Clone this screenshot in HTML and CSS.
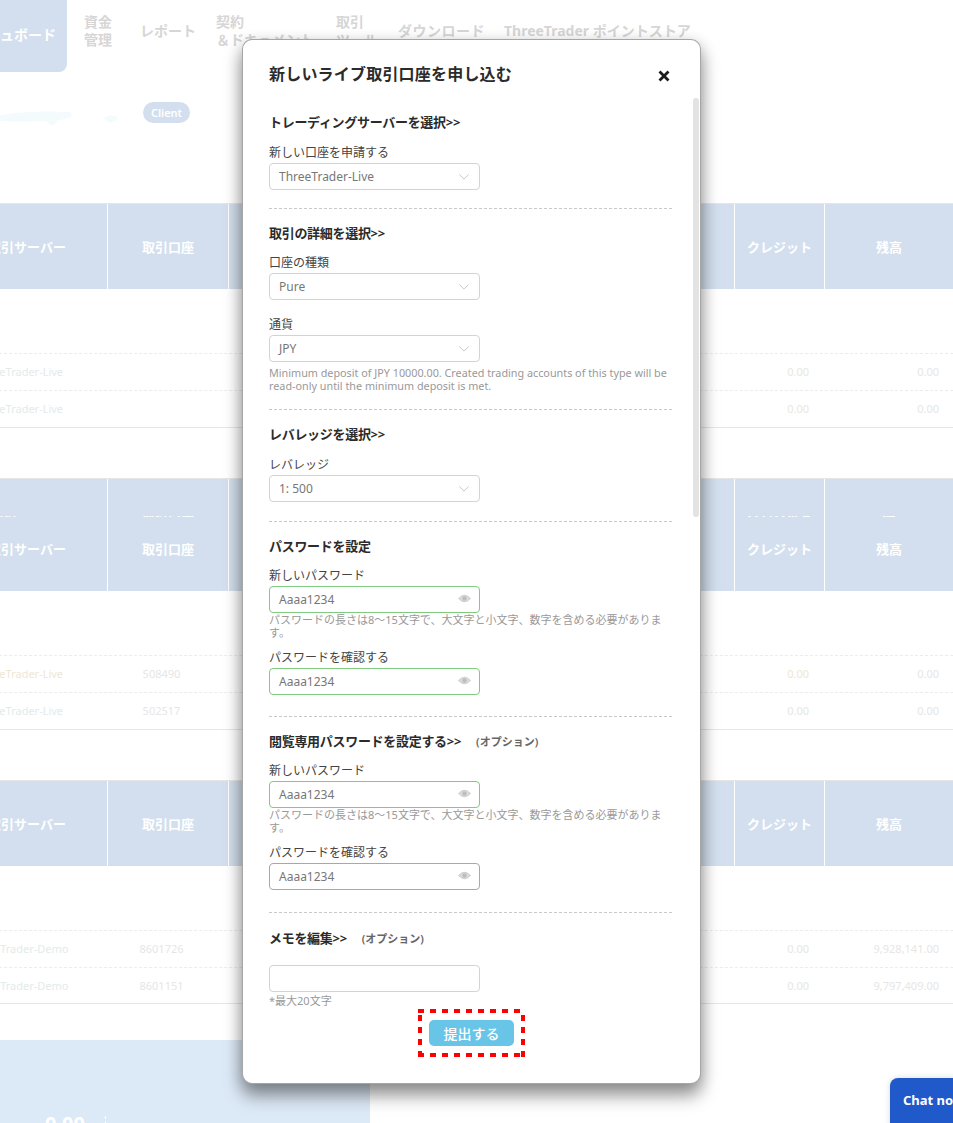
FILE: index.html
```html
<!DOCTYPE html>
<html lang="ja">
<head>
<meta charset="utf-8">
<title>新しいライブ取引口座を申し込む</title>
<link rel="stylesheet" href="styles.css">
</head>
<body>
<div class="page">
  <nav class="nav">
    <a class="tab">ダッシュボード</a>
    <a class="nav-item funds">資金<br>管理</a>
    <a class="nav-item">レポート</a>
    <a class="nav-item docs">契約<br>＆ドキュメント</a>
    <a class="nav-item tools">取引<br>ツール</a>
    <a class="nav-item dl">ダウンロード</a>
    <a class="nav-item">ThreeTrader ポイントストア</a>
  </nav>
  <div class="welcome">
    <svg class="smudge" width="125" height="20" viewBox="0 0 125 20"><path d="M0 6 Q30 1 70 3 L72 6 Q72 10 58 11 L52 17 L46 12 Q20 13 0 12Z" fill="#f3fbfd"/><path d="M103 9 L110 6 L117 8 L117 11 L110 14Z" fill="#f3fbfd"/></svg>
    <span class="badge">Client</span>
  </div>

  <section class="table t1">
    <div class="row head">
      <div class="cell">取引サーバー</div><div class="cell">取引口座</div><div class="cell"></div><div class="cell">クレジット</div><div class="cell">残高</div>
    </div>
    <div class="spacer"></div>
    <div class="row data"><div class="cell srv">ThreeTrader-Live</div><div class="cell"></div><div class="cell"></div><div class="cell num tint">0.00</div><div class="cell num">0.00</div></div>
    <div class="row data last"><div class="cell srv">ThreeTrader-Live</div><div class="cell"></div><div class="cell"></div><div class="cell num tint">0.00</div><div class="cell num">0.00</div></div>
  </section>

  <section class="table t2">
    <div class="row head tall">
      <div class="cell"><span class="ghost">取引</span>取引サーバー</div><div class="cell"><span class="ghost">取引口座</span>取引口座</div><div class="cell"></div><div class="cell"><span class="ghost">クレジット</span>クレジット</div><div class="cell"><span class="ghost">残</span>残高</div>
    </div>
    <div class="spacer"></div>
    <div class="row data"><div class="cell srv warm">ThreeTrader-Live</div><div class="cell acct">508490</div><div class="cell"></div><div class="cell num warm">0.00</div><div class="cell num">0.00</div></div>
    <div class="row data last"><div class="cell srv">ThreeTrader-Live</div><div class="cell acct">502517</div><div class="cell"></div><div class="cell num">0.00</div><div class="cell num">0.00</div></div>
  </section>

  <section class="table t3">
    <div class="row head">
      <div class="cell">取引サーバー</div><div class="cell">取引口座</div><div class="cell"></div><div class="cell">クレジット</div><div class="cell">残高</div>
    </div>
    <div class="spacer"></div>
    <div class="row data"><div class="cell srv">ThreeTrader-Demo</div><div class="cell acct">8601726</div><div class="cell"></div><div class="cell num">0.00</div><div class="cell num">9,928,141.00</div></div>
    <div class="row data last"><div class="cell srv">ThreeTrader-Demo</div><div class="cell acct">8601151</div><div class="cell"></div><div class="cell num">0.00</div><div class="cell num">9,797,409.00</div></div>
  </section>

  <div class="panel"><span class="panel-num">0.00</span><span class="panel-rule"></span></div>
</div>

<div class="modal">
  <header class="modal-head">
    <h1 class="modal-title">新しいライブ取引口座を申し込む</h1>
    <svg class="close" width="12" height="12" viewBox="0 0 12 12"><path d="M1.5 1.5 L10.5 10.5 M10.5 1.5 L1.5 10.5" stroke="#1b1b1b" stroke-width="2.8"/></svg>
  </header>
  <div class="modal-body">
    <span class="thumb"></span>

    <div class="sec s1">
      <h2 class="sec-title">トレーディングサーバーを選択&gt;&gt;</h2>
      <div class="label">新しい口座を申請する</div>
      <div class="control"><span>ThreeTrader-Live</span><svg class="chev" width="10" height="6" viewBox="0 0 12 7"><path d="M.5.5 L6 6 L11.500.5" fill="none" stroke="#bdbdbd"/></svg></div>
    </div>

    <div class="sec s2">
      <h2 class="sec-title">取引の詳細を選択&gt;&gt;</h2>
      <div class="label">口座の種類</div>
      <div class="control"><span>Pure</span><svg class="chev" width="10" height="6" viewBox="0 0 12 7"><path d="M.5.5 L6 6 L11.500.5" fill="none" stroke="#bdbdbd"/></svg></div>
      <div class="label next">通貨</div>
      <div class="control"><span>JPY</span><svg class="chev" width="10" height="6" viewBox="0 0 12 7"><path d="M.5.5 L6 6 L11.500.5" fill="none" stroke="#bdbdbd"/></svg></div>
      <p class="hint hint-en">Minimum deposit of JPY 10000.00. Created trading accounts of this type will be read-only until the minimum deposit is met.</p>
    </div>

    <div class="sec s3">
      <h2 class="sec-title">レバレッジを選択&gt;&gt;</h2>
      <div class="label">レバレッジ</div>
      <div class="control"><span>1: 500</span><svg class="chev" width="10" height="6" viewBox="0 0 12 7"><path d="M.5.5 L6 6 L11.500.5" fill="none" stroke="#bdbdbd"/></svg></div>
    </div>

    <div class="sec s4">
      <h2 class="sec-title">パスワードを設定</h2>
      <div class="label">新しいパスワード</div>
      <div class="control ok"><span>Aaaa1234</span><svg class="eye" width="13" height="9" viewBox="0 0 13 9"><path d="M.5 4.500 Q6.500-2 12.500 4.500 Q6.500 11 .5 4.500Z" fill="#dcdcdc" stroke="#c4c4c4" stroke-width=".8"/><circle cx="6.500" cy="4.500" r="2.200" fill="#bdbdbd"/></svg></div>
      <p class="hint">パスワードの長さは8～15文字で、大文字と小文字、数字を含める必要があります。</p>
      <div class="label after-hint">パスワードを確認する</div>
      <div class="control ok"><span>Aaaa1234</span><svg class="eye" width="13" height="9" viewBox="0 0 13 9"><path d="M.5 4.500 Q6.500-2 12.500 4.500 Q6.500 11 .5 4.500Z" fill="#dcdcdc" stroke="#c4c4c4" stroke-width=".8"/><circle cx="6.500" cy="4.500" r="2.200" fill="#bdbdbd"/></svg></div>
    </div>

    <div class="sec s5">
      <h2 class="sec-title">閲覧専用パスワードを設定する&gt;&gt;<small class="optional">(オプション)</small></h2>
      <div class="label">新しいパスワード</div>
      <div class="control ok"><span>Aaaa1234</span><svg class="eye" width="13" height="9" viewBox="0 0 13 9"><path d="M.5 4.500 Q6.500-2 12.500 4.500 Q6.500 11 .5 4.500Z" fill="#dcdcdc" stroke="#c4c4c4" stroke-width=".8"/><circle cx="6.500" cy="4.500" r="2.200" fill="#bdbdbd"/></svg></div>
      <p class="hint">パスワードの長さは8～15文字で、大文字と小文字、数字を含める必要があります。</p>
      <div class="label after-hint">パスワードを確認する</div>
      <div class="control grey"><span>Aaaa1234</span><svg class="eye" width="13" height="9" viewBox="0 0 13 9"><path d="M.5 4.500 Q6.500-2 12.500 4.500 Q6.500 11 .5 4.500Z" fill="#dcdcdc" stroke="#c4c4c4" stroke-width=".8"/><circle cx="6.500" cy="4.500" r="2.200" fill="#bdbdbd"/></svg></div>
    </div>

    <div class="sec s6">
      <h2 class="sec-title">メモを編集&gt;&gt;<small class="optional">(オプション)</small></h2>
      <div class="control memo"></div>
      <p class="hint memo-hint">*最大20文字</p>
    </div>
  </div>
  <footer class="modal-foot">
    <div class="highlight"><button class="submit" type="button">提出する</button></div>
  </footer>
</div>

<div class="chat">Chat now</div>
</body>
</html>
```
FILE: styles.css
```css
* { box-sizing: border-box; }
html, body { margin: 0; padding: 0; }
body {
  position: relative;
  width: 953px;
  height: 1123px;
  overflow: hidden;
  background: #fff;
  font-family: "Noto Sans", "Noto Sans CJK JP", sans-serif;
  color: #333;
}

/* background page */
.page { width: 1014px; margin-left: -61px; }
.nav { display: flex; height: 72px; gap: 20px; font-size: 14px; font-weight: 700; line-height: 18px; color: #d6d6d6; }
.tab {
  width: 128px;
  height: 72px;
  padding: 26px 0 0 19px;
  background: #d3dfee;
  color: #fff;
  border-radius: 0 0 8px 0;
  white-space: nowrap;
  margin-right: -3px;
}
.nav-item { align-self: flex-start; margin-top: 13px; white-space: nowrap; }
.nav-item:not(.funds):not(.docs):not(.tools) { margin-top: 22px; }
.funds { margin-right: 8px; }
.docs { width: 100px; }
.tools { width: 42px; }
.dl { width: 86px; letter-spacing: .5px; }

.welcome { position: relative; height: 131px; display: flex; }
.smudge { margin: 37px 0 0 61px; flex: none; }
.badge {
  align-self: flex-start;
  margin: 30px 0 0 18px;
  width: 47px;
  height: 21px;
  border-radius: 11px;
  background: #d3dfee;
  color: #fff;
  font-size: 11px;
  font-weight: 600;
  line-height: 21px;
  text-align: center;
}

.table { border-top: 1px solid #e6e6e6; }
.t2 { margin-top: 50px; }
.t3 { margin-top: 50px; }
.row { display: grid; grid-template-columns: 169px 121px 1fr 90px 128px; }
.head { height: 85px; background: #d3dfee; color: #fff; font-size: 13px; font-weight: 700; }
.head .cell {
  display: flex;
  flex-direction: column;
  align-items: center;
  justify-content: center;
  border-right: 1px solid #fff;
}
.head .cell:first-child { padding-left: 8px; }
.head .cell:last-child { border-right: 0; }
.head.tall { height: 112px; }
.head.tall .cell { justify-content: flex-end; padding-bottom: 33px; }
.ghost { display: block; height: 1px; overflow: hidden; line-height: 1px; margin-bottom: 22px; font-size: 13px; }
.head .cell:first-child .ghost { margin-right: 46px; }
.spacer { height: 64px; }
.data { height: 37px; border-top: 1px dashed #ececec; font-size: 11px; line-height: 36px; color: #e6e6e6; }
.data.last { height: 38px; border-bottom: 1px solid #e6e6e6; }
.t3 .data { line-height: 35px; }
.t3 .data.last { height: 37px; }
.srv { text-align: center; padding-right: 8px; color: #e2ebea; white-space: nowrap; }
.acct { text-align: center; padding-right: 14px; }
.num { text-align: right; padding-right: 14px; white-space: nowrap; }
.num.tint { color: #e8e8e0; padding-right: 16px; }
.warm { color: #f0e6d4; }
.row .cell:nth-child(4).num { padding-right: 16px; }

.panel {
  position: relative;
  margin: 36px 0 0 61px;
  width: 370px;
  height: 200px;
  background: #dce9f6;
  display: flex;
  padding: 72px 0 0 45px;
}
.panel-num { color: #fff; font-size: 20px; font-weight: 700; line-height: 24px; }
.panel-rule { margin: 4px 0 0 20px; height: 30px; border-left: 1px dashed #fff; }

/* modal */
.modal {
  position: absolute;
  top: 39px;
  left: 242px;
  width: 459px;
  height: 1045px;
  background: #fff;
  border-radius: 10px;
  border: 1px solid rgba(0, 0, 0, .35);
  box-shadow: 0 12px 18px rgba(0, 0, 0, .36), 0 4px 16px rgba(0, 0, 0, .2);
  display: flex;
  flex-direction: column;
  overflow: hidden;
}
.modal-head { position: relative; height: 57px; padding: 23px 0 0 26px; flex: none; }
.modal-title { margin: 0; font-size: 16px; line-height: 22px; font-weight: 700; letter-spacing: .2px; color: #2b2b2b; }
.close { position: absolute; left: 415px; top: 30px; }
.modal-body { position: relative; flex: 1; overflow: hidden; padding: 0 28px 0 26px; }
.thumb { position: absolute; right: 1px; top: 1px; width: 6px; height: 419px; background: #e3e3e3; border-radius: 3px; }
.sec { border-bottom: 1px dashed #c8c8c8; padding: 15px 0 18px; }
.s1 { padding-top: 16px; }
.s2 { padding-bottom: 17px; }
.s3 { padding-bottom: 19px; }
.s4 { padding-bottom: 21px; }
.s5 { padding-bottom: 22px; }
.s6 { border-bottom: 0; padding: 16px 0 0; }
.sec-title { margin: 0 0 14px; font-size: 13px; line-height: 18px; font-weight: 700; letter-spacing: -.3px; color: #2b2b2b; white-space: nowrap; }
.s2 .sec-title, .s4 .sec-title { margin-bottom: 13px; }
.s5 .sec-title { margin-bottom: 12px; }
.s6 .sec-title { margin-bottom: 17px; }
.optional { margin-left: 15px; font-size: 11px; font-weight: 600; letter-spacing: 0; color: #666; }
.label { font-size: 12px; line-height: 16px; margin-bottom: 2px; color: #444; }
.label.next { margin-top: 17px; }
.label.after-hint { margin-top: 11px; }
.control {
  width: 211px;
  height: 27px;
  border: 1px solid #d3d3d3;
  border-radius: 4px;
  padding: 0 10px 0 9px;
  display: flex;
  align-items: center;
  justify-content: space-between;
  font-size: 12px;
  color: #777;
}
.control.ok { border-color: #7fcb7f; }
.control.grey { border-color: #a8a8a8; }
.eye { margin: -2px -2px 0 0; }
.hint { margin: 0; font-size: 11px; line-height: 13px; color: #999; }
.hint-en { margin-top: 4px; font-size: 10.8px; }
.memo-hint { margin-top: 1px; line-height: 16px; }
.modal-foot { flex: none; height: 74px; display: flex; justify-content: center; align-items: flex-start; }
.highlight {
  padding: 11px;
  height: 48px;
  width: 107px;
  background:
    repeating-linear-gradient(90deg, #f00 0 6px, transparent 6px 12px) top / 100% 4px no-repeat,
    repeating-linear-gradient(90deg, #f00 0 6px, transparent 6px 12px) bottom / 100% 4px no-repeat,
    repeating-linear-gradient(0deg, #f00 0 6px, transparent 6px 12px) left / 4px 100% no-repeat,
    repeating-linear-gradient(0deg, #f00 0 6px, transparent 6px 12px) right / 4px 100% no-repeat;
}
.submit {
  display: block;
  width: 85px;
  height: 26px;
  border: 0;
  border-radius: 5px;
  background: #69c5e8;
  color: #fff;
  font: 500 14px "Noto Sans", "Noto Sans CJK JP", sans-serif;
}

.chat {
  position: absolute;
  left: 890px;
  top: 1078px;
  width: 120px;
  height: 60px;
  padding: 13px 0 0 13px;
  background: #2059c9;
  color: #fff;
  font-size: 13px;
  font-weight: 700;
  line-height: 18px;
  border-radius: 8px 0 0 0;
  box-shadow: 0 0 6px rgba(0, 0, 0, .15);
  white-space: nowrap;
}
```
